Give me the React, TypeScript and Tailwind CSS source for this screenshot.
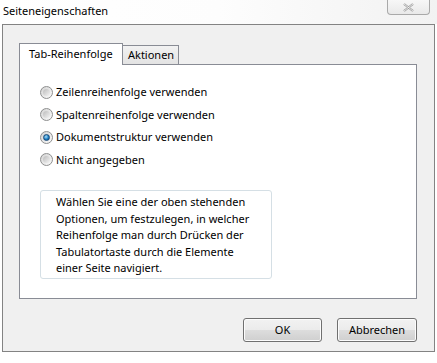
import { useState } from "react";

const OPTIONS = [
    "Zeilenreihenfolge verwenden",
    "Spaltenreihenfolge verwenden",
    "Dokumentstruktur verwenden",
    "Nicht angegeben",
];

const HINT_LINES = [
    "Wählen Sie eine der oben stehenden",
    "Optionen, um festzulegen, in welcher",
    "Reihenfolge man durch Drücken der",
    "Tabulatortaste durch die Elemente",
    "einer Seite navigiert.",
];

function Radio({ checked }: { checked: boolean }) {
    return (
        <span className="w-[13px] h-[13px] rounded-full border border-[#8e8f8f] bg-gradient-to-br from-[#d4d4d4] to-[#fbfbfb] flex items-center justify-center shrink-0">
            {checked ? (
                <span className="w-[7px] h-[7px] rounded-full bg-[radial-gradient(circle_at_40%_35%,#a9dcf6_0%,#1c7fc4_55%,#0d3c6c_100%)] border border-[#1a4a78]" />
            ) : (
                <span className="w-[7px] h-[7px] rounded-full bg-gradient-to-br from-[#bcbcbc] to-[#f4f4f4]" />
            )}
        </span>
    );
}

function DialogButton({ label }: { label: string }) {
    return (
        <button className="h-[24px] rounded-[3px] border border-[#707070] bg-[linear-gradient(#f2f2f2_0%,#ebebeb_50%,#dddddd_51%,#cfcfcf_100%)] text-[11px] text-black shadow-[inset_0_0_0_1px_#fcfcfc]">
            {label}
        </button>
    );
}

export default function App() {
    const [selected, setSelected] = useState(2);

    return (
        <div className="w-[437px] h-[363px] bg-white flex flex-col text-[11px] text-black" style={{ fontFamily: "'Noto Sans', 'Open Sans', sans-serif" }}>
            {/* Title bar */}
            <div className="h-[24px] shrink-0 flex items-start justify-between bg-gradient-to-r from-white via-[#fdfdfd] to-[#f2f2f2]">
                <span className="pl-[3px] pt-[3px] text-[11px]">Seiteneigenschaften</span>
                <div className="mr-[7px] w-[43px] h-[15px] rounded-b-[4px] border border-t-0 border-[#a9a9a9] bg-gradient-to-b from-[#f7f7f7] to-[#e9e9e9] flex items-center justify-center">
                    <svg width="11" height="9" viewBox="0 0 11 9">
                        <path d="M1 1 L10 8 M10 1 L1 8" stroke="#9a9a9a" strokeWidth="2.2" fill="none" />
                        <path d="M1 1 L10 8 M10 1 L1 8" stroke="#f6f6f6" strokeWidth="0.8" fill="none" />
                    </svg>
                </div>
            </div>

            {/* Body */}
            <div className="mx-[2px] h-[328px] border border-[#838383] bg-[#f0f0f0] flex flex-col pl-[16px] pr-[17px] pt-[18px]">
                {/* Tabs */}
                <div className="flex items-end h-[21px]">
                    <div className="relative z-10 h-[22px] -mb-px w-[104px] bg-white border border-b-0 border-[#898c95] pl-[9px] pt-[2px]">Tab-Reihenfolge</div>
                    <div className="h-[19px] w-[56px] border border-l-0 border-b-0 border-[#898c95] bg-gradient-to-b from-[#f2f2f2] to-[#e3e3e3] pl-[5px] leading-[18px]">Aktionen</div>
                </div>

                {/* Panel */}
                <div className="h-[235px] bg-white border border-[#898c95] pl-[20px] pt-[16px]">
                    <div className="flex flex-col">
                        {OPTIONS.map((o, i) => (
                            <label key={o} onClick={() => setSelected(i)} className="h-[22.5px] flex items-center gap-[3px] cursor-default">
                                <Radio checked={selected === i} />
                                <span>{o}</span>
                            </label>
                        ))}
                    </div>
                    <div className="mt-[19px] w-[232px] h-[89px] rounded-[3px] border border-[#d5dfe5] pl-[15px] pt-[3px] leading-[16.5px] whitespace-nowrap">
                        {HINT_LINES.map((l) => (
                            <div key={l}>{l}</div>
                        ))}
                    </div>
                </div>

                {/* Buttons */}
                <div className="flex justify-end gap-[15px] mt-[19px]">
                    <div className="w-[79px] flex flex-col"><DialogButton label="OK" /></div>
                    <div className="w-[80px] flex flex-col"><DialogButton label="Abbrechen" /></div>
                </div>
            </div>
        </div>
    );
}
